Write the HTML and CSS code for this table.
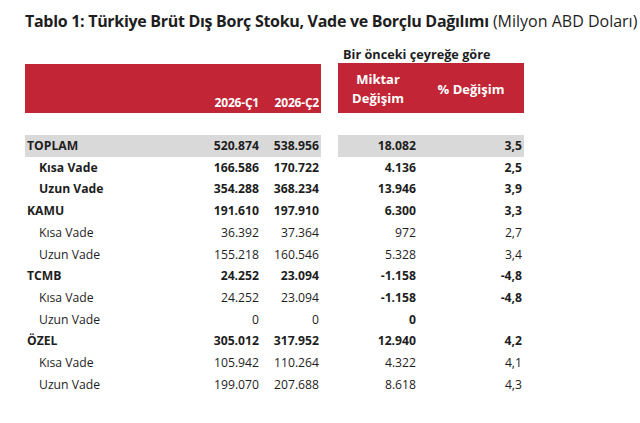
FILE: index.html
```html
<!DOCTYPE html>
<html lang="tr">
<head>
<meta charset="utf-8">
<title>Tablo 1</title>
<link rel="stylesheet" href="styles.css">
</head>
<body>
<div class="page">
  <h1 class="title"><b>Tablo 1: Türkiye Brüt Dış Borç Stoku, Vade ve Borçlu Dağılımı</b> <span class="unit">(Milyon ABD Doları)</span></h1>
  <div class="tables">
    <table class="tbl left">
      <colgroup><col class="c-label"><col class="c-q1"><col class="c-q2"></colgroup>
      <thead>
        <tr class="head"><th></th><th class="num bottom">2026-Ç1</th><th class="num bottom">2026-Ç2</th></tr>
      </thead>
      <tbody>
        <tr class="spacer"><td colspan="3"></td></tr>
        <tr class="total b"><td class="lbl">TOPLAM</td><td class="num">520.874</td><td class="num">538.956</td></tr>
        <tr class="b"><td class="lbl sub">Kısa Vade</td><td class="num">166.586</td><td class="num">170.722</td></tr>
        <tr class="b"><td class="lbl sub">Uzun Vade</td><td class="num">354.288</td><td class="num">368.234</td></tr>
        <tr class="b"><td class="lbl">KAMU</td><td class="num">191.610</td><td class="num">197.910</td></tr>
        <tr><td class="lbl sub">Kısa Vade</td><td class="num">36.392</td><td class="num">37.364</td></tr>
        <tr><td class="lbl sub">Uzun Vade</td><td class="num">155.218</td><td class="num">160.546</td></tr>
        <tr class="b"><td class="lbl">TCMB</td><td class="num">24.252</td><td class="num">23.094</td></tr>
        <tr><td class="lbl sub">Kısa Vade</td><td class="num">24.252</td><td class="num">23.094</td></tr>
        <tr><td class="lbl sub">Uzun Vade</td><td class="num">0</td><td class="num">0</td></tr>
        <tr class="b"><td class="lbl">ÖZEL</td><td class="num">305.012</td><td class="num">317.952</td></tr>
        <tr><td class="lbl sub">Kısa Vade</td><td class="num">105.942</td><td class="num">110.264</td></tr>
        <tr><td class="lbl sub">Uzun Vade</td><td class="num">199.070</td><td class="num">207.688</td></tr>
      </tbody>
    </table>
    <div class="rightcol">
      <div class="caption">Bir önceki çeyreğe göre</div>
      <table class="tbl right">
        <colgroup><col class="c-amt"><col class="c-pct"></colgroup>
        <thead>
          <tr class="head"><th class="center">Miktar<br>Değişim</th><th class="center">% Değişim</th></tr>
        </thead>
        <tbody>
          <tr class="spacer"><td colspan="2"></td></tr>
          <tr class="total b"><td class="num">18.082</td><td class="num">3,5</td></tr>
          <tr class="b"><td class="num">4.136</td><td class="num">2,5</td></tr>
          <tr class="b"><td class="num">13.946</td><td class="num">3,9</td></tr>
          <tr class="b"><td class="num">6.300</td><td class="num">3,3</td></tr>
          <tr><td class="num">972</td><td class="num">2,7</td></tr>
          <tr><td class="num">5.328</td><td class="num">3,4</td></tr>
          <tr class="b"><td class="num">-1.158</td><td class="num">-4,8</td></tr>
          <tr class="b"><td class="num">-1.158</td><td class="num">-4,8</td></tr>
          <tr class="b"><td class="num">0</td><td class="num"></td></tr>
          <tr class="b"><td class="num">12.940</td><td class="num">4,2</td></tr>
          <tr><td class="num">4.322</td><td class="num">4,1</td></tr>
          <tr><td class="num">8.618</td><td class="num">4,3</td></tr>
        </tbody>
      </table>
    </div>
  </div>
</div>
</body>
</html>
```

FILE: styles.css
```css
html, body {
  margin: 0;
  padding: 0;
  background: #ffffff;
}
body {
  font-family: "Open Sans", "Liberation Sans", sans-serif;
  color: #1e1e1e;
}
.page {
  padding: 9px 0 0 25px;
}
.title {
  margin: 0;
  font-size: 16px;
  line-height: 24px;
  font-weight: 400;
  white-space: nowrap;
}
.title b {
  font-weight: 700;
  letter-spacing: -0.3px;
}
.title .unit {
  letter-spacing: 0;
}
.tables {
  display: flex;
  align-items: flex-end;
  gap: 17px;
  margin-top: 13px;
}
.rightcol {
  display: flex;
  flex-direction: column;
}
.caption {
  font-size: 12.7px;
  font-weight: 700;
  line-height: 17px;
  padding-left: 5px;
}
.tbl {
  border-collapse: collapse;
  table-layout: fixed;
  font-size: 12.2px;
}
.tbl.left { width: 296px; }
.tbl.right { width: 186px; }
.c-label { width: 178px; }
.c-q1 { width: 58px; }
.c-q2 { width: 60px; }
.c-amt { width: 80px; }
.c-pct { width: 106px; }
.tbl td, .tbl th {
  padding: 0 2px;
  line-height: 21.7px;
  height: 21.7px;
  white-space: nowrap;
}
.head th {
  background: #c22636;
  color: #ffffff;
  height: 48px;
  font-weight: 700;
  font-size: 12px;
  line-height: 19px;
  letter-spacing: -0.2px;
}
.head th.bottom {
  vertical-align: bottom;
  padding-bottom: 1px;
  text-align: right;
}
.head th.center {
  text-align: center;
  vertical-align: middle;
  padding-top: 2px;
  font-size: 13px;
  letter-spacing: 0;
}
.spacer td {
  height: 22px;
  line-height: 22px;
}
.num { text-align: right; }
.lbl { text-align: left; }
.lbl.sub { padding-left: 14px; }
.b td { font-weight: 700; }
.total td { background: #d9d9d9; }
```
